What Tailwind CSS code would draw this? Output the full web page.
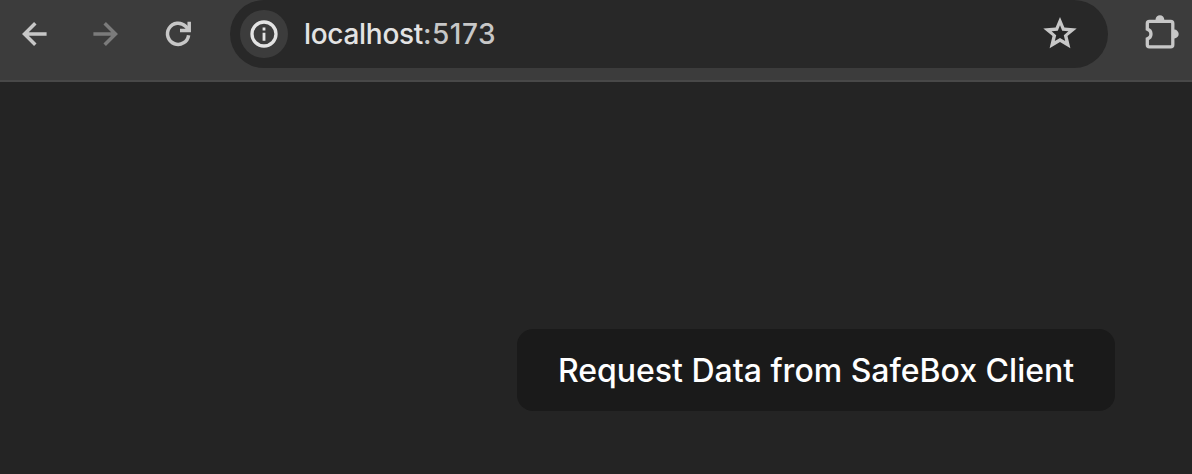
<!DOCTYPE html>
<html lang="en">
<head>
<meta charset="utf-8">
<title>localhost:5173</title>
<script src="https://cdn.jsdelivr.net/npm/@tailwindcss/browser@4"></script>
</head>
<body class="flex h-[474px] w-[1192px] flex-col overflow-hidden bg-[#242424] font-['Inter',sans-serif]">
<header class="flex h-[82px] shrink-0 items-start border-b-2 border-[#484848] bg-[#3c3c3c] text-[#c7c7c7]">
  <nav class="flex h-[68px] items-center gap-[32px] pl-[14px]">
    <button aria-label="Back"><svg class="block size-[40px]" viewBox="0 0 40 40" fill="none" stroke="currentColor" stroke-width="3.5"><path d="M32.6 20H10.5M21.3 9.2 10.5 20l10.8 10.8"/></svg></button>
    <button aria-label="Forward" class="text-[#7b7b7b]"><svg class="block size-[40px]" viewBox="0 0 40 40" fill="none" stroke="currentColor" stroke-width="3.5"><path d="M7.4 20H29.5M18.7 9.2 29.5 20 18.7 30.8"/></svg></button>
    <button aria-label="Reload"><svg class="block size-[40px]" viewBox="0 0 40 40" fill="none" stroke="currentColor" stroke-width="3.5"><path d="M30.6 21.2A10.6 10.6 0 1 1 27.6 12.3L30.5 15.5"/><path d="M31.2 7.7V16.5H22"/></svg></button>
  </nav>
  <div class="ml-[32px] flex h-[68px] w-[878px] items-center rounded-full bg-[#282828] pr-[28px] pl-[10px]">
    <div class="flex size-[48px] items-center justify-center rounded-full bg-[#3c3c3c] text-[#e3e3e3]">
      <svg class="size-[28px]" viewBox="0 0 28 28" fill="none" stroke="currentColor" stroke-width="3.3"><circle cx="14" cy="14" r="12"/><path d="M14 12.7V20.8M14 7.5V10.5" stroke-width="2.8"/></svg>
    </div>
    <div class="ml-[16px] grow text-[28px] leading-[34px] font-[450] tracking-[-0.3px] text-[#e3e3e3]">localhost<span class="tracking-[0.5px] text-[#c7c7c7]">:5173</span></div>
    <button aria-label="Bookmark"><svg class="block size-[40px]" viewBox="0 0 40 40" fill="currentColor" fill-rule="evenodd"><path d="M20 3 24.4 13.6 36.7 14.5 27.5 22 30.4 34.3 20 28 9.6 34.3 12.5 22 3.3 14.5 15.6 13.6ZM20 11.2 17.8 16.8 11.6 17.3 16.2 21.2 14.8 27 20 23.9 25.2 27 23.8 21.2 28.4 17.3 22.2 16.8Z"/></svg></button>
  </div>
  <button aria-label="Extensions" class="ml-[32px] flex h-[68px] items-center"><svg class="block size-[44px]" viewBox="0 0 44 44"><path d="M7.3 11.4Q7.3 9.3 9.4 9.3H30.7Q32.8 9.3 32.8 11.4V32.7Q32.8 34.8 30.7 34.8H9.4Q7.3 34.8 7.3 32.7V26.9A5.1 5.1 0 0 0 7.3 17.1Z" fill="none" stroke="currentColor" stroke-width="3.3"/><path d="M15.5 8.5V7.7a4.4 4.4 0 0 1 8.8 0V8.5ZM33.5 17.6h.8a4.4 4.4 0 0 1 0 8.8h-.8Z" fill="currentColor"/></svg></button>
</header>
<main class="flex grow items-start justify-end pt-[247px] pr-[77px]">
  <button class="flex h-[82px] w-[598px] items-center justify-center rounded-[16px] bg-[#1a1a1a] pt-[2px] text-[32px] font-medium whitespace-nowrap text-white">Request Data from SafeBox Client</button>
</main>
</body>
</html>
